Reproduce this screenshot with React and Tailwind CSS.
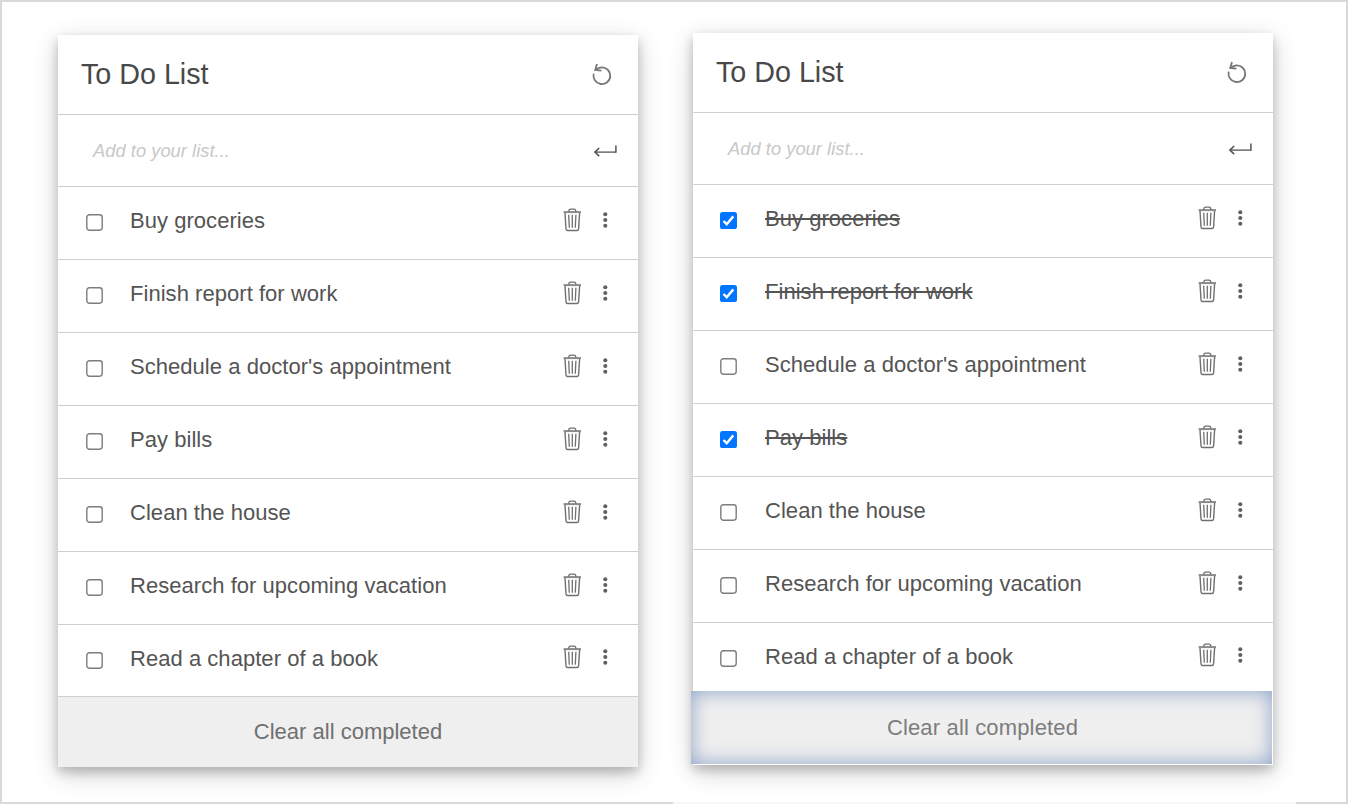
import React from "react";

const TASKS = [
  "Buy groceries",
  "Finish report for work",
  "Schedule a doctor's appointment",
  "Pay bills",
  "Clean the house",
  "Research for upcoming vacation",
  "Read a chapter of a book",
];

function ResetIcon() {
  return (
    <svg className="h-6 w-6" viewBox="0 0 24 24" fill="none" stroke="#777" strokeWidth="1.8">
      <path d="M3.7 10.6A8.4 8.4 0 1 0 11.4 4.3Q8.6 4.6 5.6 6.8" />
      <path d="M7 0.9L5.2 6.9L11.4 7.7" />
    </svg>
  );
}

function EnterIcon() {
  return (
    <svg className="h-4 w-6" viewBox="0 0 24 16" fill="none" stroke="#555">
      <path d="M2 9.1H23" strokeWidth="1.3" />
      <path d="M22.9 2.6V9.7" strokeWidth="1.5" />
      <path d="M6.2 5L1.9 9.1L6.2 13.2" strokeWidth="1.6" />
    </svg>
  );
}

function TrashIcon() {
  return (
    <svg className="h-6 w-5" viewBox="0 0 20 24" fill="none" stroke="#707070">
      <path d="M1.6 4.1H19" strokeWidth="2" stroke="#8a8a8a" />
      <path d="M6.6 3.6Q6.9 1.2 8.6 1.2H12Q13.7 1.2 14 3.6" strokeWidth="1.3" />
      <path d="M3 5L4 20.9Q4.2 22.5 5.6 22.5H15Q16.4 22.5 16.6 20.9L17.6 5" strokeWidth="1.4" />
      <path d="M6.7 6.8L7.3 19.8M10.3 6.8V19.8M13.9 6.8L13.3 19.8" strokeWidth="1.3" />
    </svg>
  );
}

function DotsIcon() {
  return (
    <svg className="h-5 w-2" viewBox="0 0 8 20" fill="#606060">
      <circle cx="4.3" cy="4.3" r="2.05" />
      <circle cx="4.3" cy="10" r="2.05" />
      <circle cx="4.3" cy="15.7" r="2.05" />
    </svg>
  );
}

function CheckBox({ checked }) {
  return (
    <svg className="h-[17px] w-[17px]" viewBox="0 0 17 17" fill="none" role="checkbox" aria-checked={checked}>
      {checked ? (
        <>
          <rect width="17" height="17" rx="2.6" fill="#0075ff" />
          <path d="M3.5 9L6.7 12.2L13.3 4.4" stroke="#fff" strokeWidth="2.4" />
        </>
      ) : (
        <rect x="0.8" y="0.8" width="15.4" height="15.4" rx="2.6" stroke="#7d7d7d" strokeWidth="1.4" />
      )}
    </svg>
  );
}

function TodoRow({ label, checked, nudged }) {
  return (
    <li className="flex h-[73px] items-center border-b border-[#cfcfcf] pl-[28px] pr-[29px] last:h-[72px]">
      <span className={nudged ? "-ml-px -mt-px mr-px" : "-mt-px"}>
        <CheckBox checked={checked} />
      </span>
      <span
        className={
          "ml-[27px] -mt-1 flex-1 whitespace-nowrap text-[22px] leading-7 tracking-[0.04px] text-[#545454] " +
          (checked ? "line-through decoration-2" : "")
        }
      >
        {label}
      </span>
      <span className="-mt-[7px]">
        <TrashIcon />
      </span>
      <span className="-mt-[7px] ml-[19px]">
        <DotsIcon />
      </span>
    </li>
  );
}

function TodoCard({ done, focused, className }) {
  return (
    <section
      className={
        "flex w-[580px] flex-col bg-white shadow-[0_5px_10px_rgba(0,0,0,0.2),0_7px_24px_rgba(0,0,0,0.19)] " + className
      }
    >
      <header className="flex h-[80px] items-center justify-between border-b border-[#cfcfcf] pl-[23px] pr-6">
        <h1 className="-mt-px text-[28.7px] leading-8 text-[#484848]">To Do List</h1>
        <span>
          <ResetIcon />
        </span>
      </header>
      <div className="flex h-[72px] items-center justify-between border-b border-[#cfcfcf] pl-[35px] pr-[21px]">
        <span className="text-[18.3px] italic leading-6 tracking-[0.04px] text-[#c8c8c8]">Add to your list...</span>
        <EnterIcon />
      </div>
      <ul className={focused ? "h-[506px] overflow-hidden" : "h-[510px]"}>
        {TASKS.map((task, i) => (
          <TodoRow key={task} label={task} checked={done.includes(i)} nudged={focused} />
        ))}
      </ul>
      {focused ? (
        <button className="-ml-[2px] mb-px h-[73px] w-[581px] bg-[#efefef] pl-[2px] text-[22px] tracking-[0.15px] text-[#7d7d7d] shadow-[inset_0_0_20px_rgba(65,105,170,0.58)]">
          Clear all completed
        </button>
      ) : (
        <button className="h-[70px] bg-[#efefef] pb-[2px] text-[22px] text-[#707070]">Clear all completed</button>
      )}
    </section>
  );
}

export default function App() {
  return (
    <main className="flex h-[804px] w-[1348px] flex-col overflow-hidden bg-white font-['Liberation_Sans',Arial,sans-serif]">
      <div className="flex h-[802px] items-start border-x-2 border-t-2 border-[#d9d9d9]">
        <TodoCard done={[]} className="ml-[56px] mt-[33px]" />
        <TodoCard done={[0, 1, 3]} focused className="ml-[55px] mt-[31px]" />
      </div>
      <div className="flex h-[2px]">
        <div className="w-[673px] bg-[#d9d9d9]" />
        <div className="w-[623px] bg-[#f7f7f7]" />
        <div className="flex-1 bg-[#d9d9d9]" />
      </div>
    </main>
  );
}
